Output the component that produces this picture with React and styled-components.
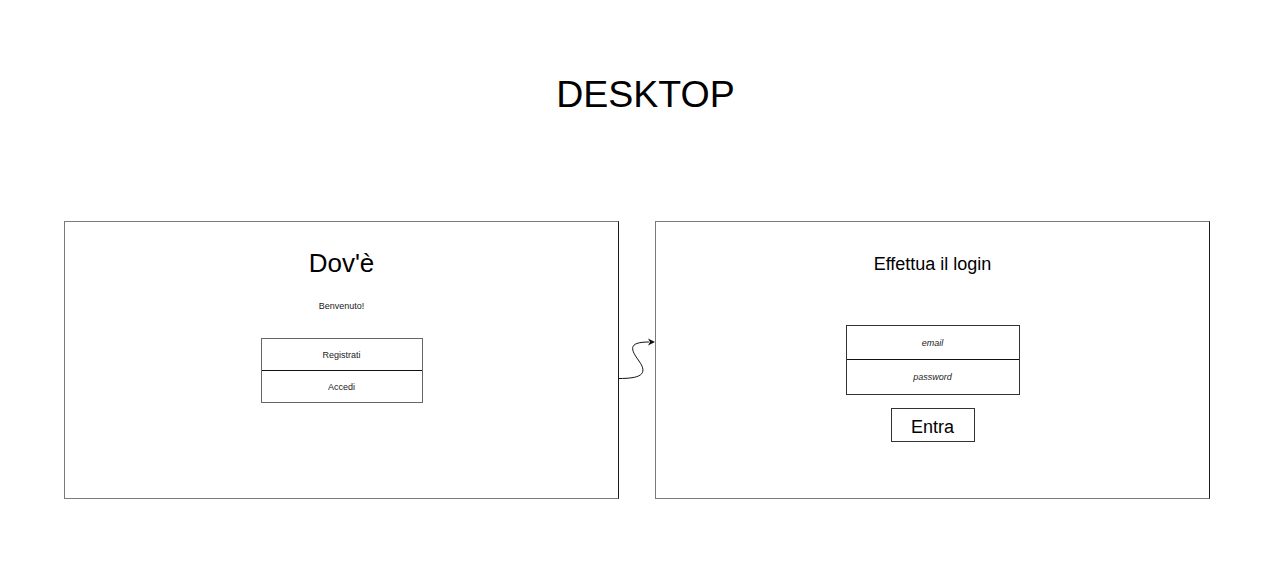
import React from "react";
import styled, { createGlobalStyle } from "styled-components";

const Global = createGlobalStyle`
  html, body { margin: 0; padding: 0; background: #fff; }
  body { font-family: "Liberation Sans", Arial, sans-serif; color: #000; }
`;

const Page = styled.div`
  width: 1285px;
  height: 569px;
  box-sizing: border-box;
  padding: 72px 0 0 64px;
`;

const Title = styled.h1`
  margin: 0 0 0 -64px;
  width: 1285px;
  box-sizing: border-box;
  padding-left: 6px;
  text-align: center;
  font-weight: normal;
  font-size: 37.5px;
  line-height: 45px;
`;

const Row = styled.div`
  position: relative;
  display: flex;
  gap: 36px;
  margin-top: 104px;
`;

const Panel = styled.section`
  width: 555px;
  height: 278px;
  box-sizing: border-box;
  border: 1px solid #7a7a7a;
  border-right-color: #1a1a1a;
  display: flex;
  flex-direction: column;
  align-items: center;
`;

const Heading = styled.h2`
  margin: ${(p) => p.$top}px 0 0;
  font-weight: normal;
  font-size: ${(p) => p.$size}px;
  line-height: ${(p) => p.$lh}px;
`;

const Small = styled.p`
  margin: 22px 0 0;
  font-size: 9px;
  line-height: 12px;
  color: #222;
`;

const Group = styled.div`
  margin-top: ${(p) => p.$top}px;
  width: ${(p) => p.$w}px;
  box-sizing: border-box;
  border: 1px solid ${(p) => p.$c};
  display: flex;
  flex-direction: column;
`;

const Cell = styled.div`
  height: ${(p) => p.$h}px;
  display: flex;
  align-items: center;
  justify-content: center;
  font-size: 9px;
  color: #222;
  font-style: ${(p) => (p.$italic ? "italic" : "normal")};
  & + & { border-top: 1px solid #111; }
`;

const Button = styled.button`
  margin-top: 13px;
  width: 84px;
  height: 34px;
  box-sizing: border-box;
  border: 1px solid #333;
  background: #fff;
  font-family: "Liberation Sans", Arial, sans-serif;
  font-size: 18px;
  line-height: 34px;
  color: #000;
  padding: 1px 0 0;
`;

const Connector = styled.svg`
  position: absolute;
  left: 555px;
  top: 0;
  overflow: visible;
`;

export default function App() {
  return (
    <>
      <Global />
      <Page>
        <Title>DESKTOP</Title>
        <Row>
          <Panel>
            <Heading $top={26} $size={26} $lh={30}>Dov'è</Heading>
            <Small>Benvenuto!</Small>
            <Group $top={26} $w={162} $c="#666">
              <Cell $h={31}>Registrati</Cell>
              <Cell $h={31}>Accedi</Cell>
            </Group>
          </Panel>
          <Panel>
            <Heading $top={30} $size={18} $lh={24}>Effettua il login</Heading>
            <Group $top={49} $w={174} $c="#333">
              <Cell $h={33} $italic>email</Cell>
              <Cell $h={34} $italic>password</Cell>
            </Group>
            <Button>Entra</Button>
          </Panel>
          <Connector width="36" height="278" viewBox="0 0 36 278">
            <path
              d="M0 157.5 C 20 157.5 30 154 20 140 C 12 129 8 121 30 121"
              fill="none"
              stroke="#111"
              strokeWidth="1"
            />
            <path d="M36 121 L29 117.5 L31 121 L29 124.5 Z" fill="#111" />
          </Connector>
        </Row>
      </Page>
    </>
  );
}
